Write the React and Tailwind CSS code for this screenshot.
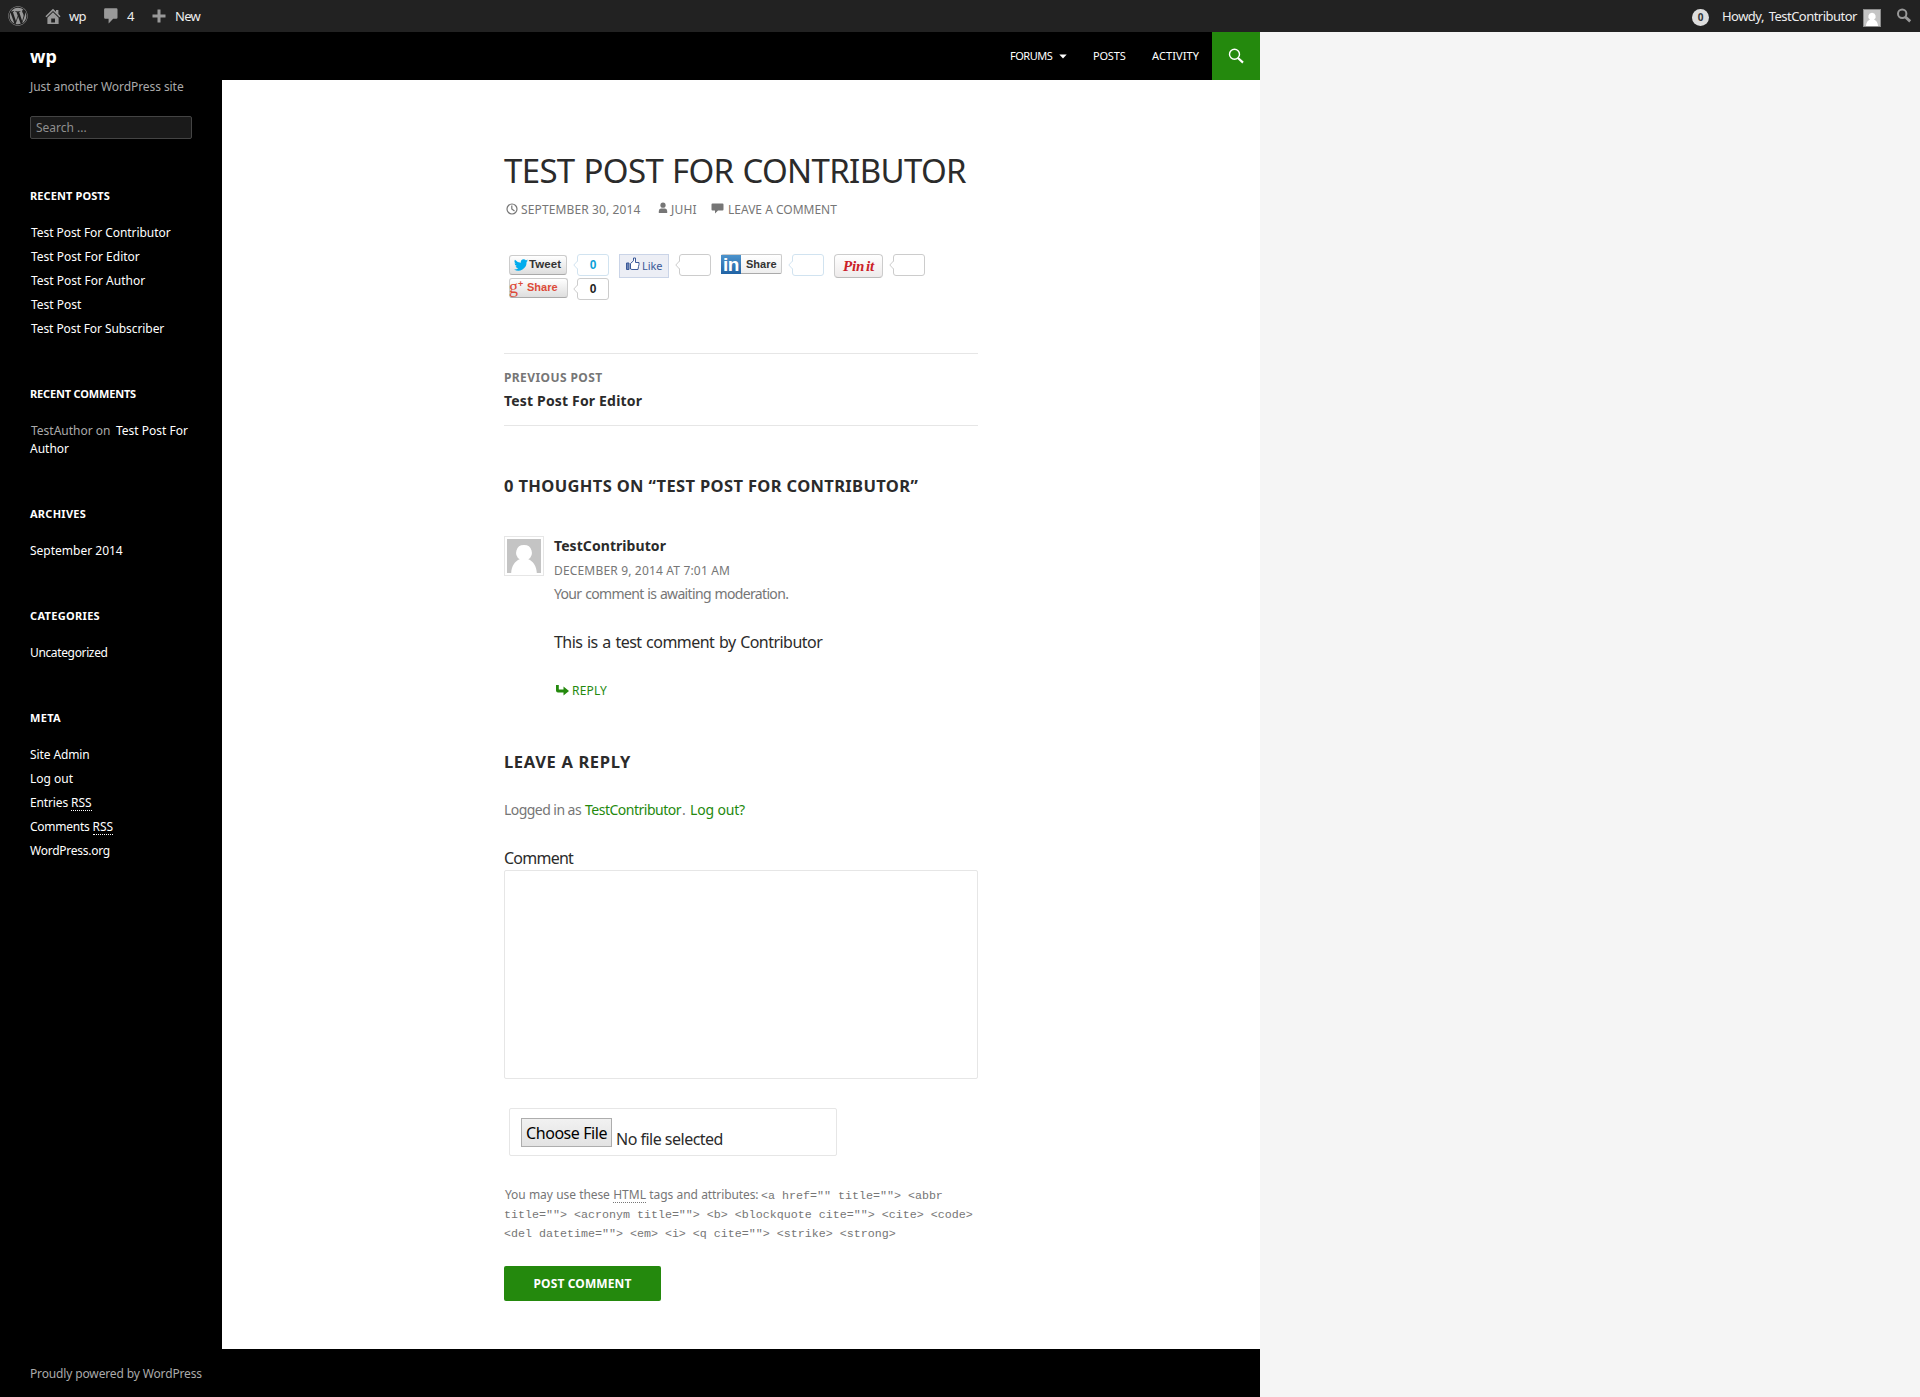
import { FaWordpress } from "react-icons/fa";

function HomeIcon() {
  return (
    <svg width="16" height="16" viewBox="0 0 16 16" className="block">
      <path fill="#999" d="M8 0.8 L11 3.7 V2 H13.4 V6 L15.6 8.2 L14.5 9.3 L8 3 L1.5 9.3 L0.4 8.2 Z" />
      <path fill="#999" fillRule="evenodd" d="M8 4.3 L13.6 9.7 V16 H2.4 V9.7 Z M6.2 10.5 V14.5 H10 V10.5 Z" />
    </svg>
  );
}

function AdminComment() {
  return (
    <svg width="14" height="16" viewBox="0 0 14 16" className="block">
      <path fill="#999" d="M1.3 0.2 H12.3 Q13.5 0.2 13.5 1.4 V9.6 Q13.5 10.8 12.3 10.8 H9.2 L4.6 15.4 V10.8 H1.3 Q0.1 10.8 0.1 9.6 V1.4 Q0.1 0.2 1.3 0.2 Z" />
    </svg>
  );
}

function Person({ className }) {
  return (
    <svg viewBox="0 0 34 34" className={className}>
      <rect width="34" height="34" fill="#c4c4c4" />
      <path fill="#fff" d="M17 6 a7.7 7.7 0 0 1 4.3 14.2 C26 22 29.5 27 29.8 34 H4.2 C4.5 27 8 22 12.7 20.2 A7.7 7.7 0 0 1 17 6 Z" />
    </svg>
  );
}

function AdminBar() {
  return (
    <div className="flex h-8 items-center bg-[#222] text-[13px] leading-8 text-[#eee]">
      <FaWordpress className="ml-2 size-5 text-[#999]" />
      <div className="ml-[17px]"><HomeIcon /></div>
      <span className="ml-2 w-[35px] tracking-[-0.6px]">wp</span>
      <AdminComment />
      <span className="ml-[9px] w-[26px]">4</span>
      <svg width="14" height="14" viewBox="0 0 14 14" className="-ml-px block">
        <path d="M7 0.5 V13.5 M0.5 7 H13.5" stroke="#999" strokeWidth="3" />
      </svg>
      <span className="ml-[9px] tracking-[-0.7px]">New</span>
      <span className="mt-[2px] mr-[13px] ml-auto flex size-[17px] items-center justify-center rounded-full bg-[#ddd] text-[10px] leading-none font-bold text-[#32373c]">0</span>
      <span className="w-[141px] tracking-[-0.53px] whitespace-nowrap [word-spacing:2px]">Howdy, TestContributor</span>
      <span className="mt-1 block size-[18px] border border-[#8c8c8c]">
        <Person className="block size-4" />
      </span>
      <svg width="16" height="16" viewBox="0 0 16 16" className="mr-2 ml-[15px] block">
        <circle cx="6.2" cy="5.8" r="4.2" fill="none" stroke="#999" strokeWidth="2" />
        <path d="M9.4 9 L14.2 13.4" stroke="#999" strokeWidth="2.8" />
      </svg>
    </div>
  );
}

function Widget({ title, tracking, children }) {
  return (
    <section className="mb-12">
      <h2 className={`mb-[21px] text-[11px] leading-[15px] font-bold text-white ${tracking}`}>{title}</h2>
      <div className="flex flex-col gap-1.5 text-xs leading-[18px] whitespace-nowrap text-white">{children}</div>
    </section>
  );
}

function Abbr({ children }) {
  return <span className="relative inline-block tracking-normal">{children}<i className="absolute inset-x-0 bottom-px border-b border-dotted border-current" /></span>;
}

function Sidebar() {
  return (
    <aside className="w-[222px] shrink-0 px-[30px]">
      <h1 className="-mb-0.5 text-lg leading-[48px] font-bold tracking-[0.1px] text-white">wp</h1>
      <p className="text-xs leading-[18px] tracking-[-0.07px] whitespace-nowrap text-[#aaa]">Just another WordPress site</p>
      <div className="mt-5 mb-[49px] h-[23px] rounded-[2px] border border-[#444] bg-[#1a1a1a] px-[5px] text-xs leading-[21px] text-[#8f8f8f]">Search ...</div>
      <Widget title="RECENT POSTS" tracking="tracking-[0.1px]">
        <a className="pl-px tracking-[-0.06px]">Test Post For Contributor</a>
        <a className="pl-px">Test Post For Editor</a>
        <a className="pl-px">Test Post For Author</a>
        <a className="pl-px">Test Post</a>
        <a className="pl-px tracking-[-0.08px]">Test Post For Subscriber</a>
      </Widget>
      <Widget title="RECENT COMMENTS" tracking="tracking-[-0.17px]">
        <p><span className="inline-block w-[86px] pl-px text-[#aaa]">TestAuthor on</span>Test Post For<br />Author</p>
      </Widget>
      <Widget title="ARCHIVES" tracking="tracking-[0.26px]">
        <a>September 2014</a>
      </Widget>
      <Widget title="CATEGORIES" tracking="tracking-[0.32px]">
        <a className="tracking-[-0.36px]">Uncategorized</a>
      </Widget>
      <Widget title="META" tracking="tracking-[0.32px]">
        <a className="tracking-[-0.1px]">Site Admin</a>
        <a>Log out</a>
        <a className="tracking-[-0.14px]">Entries <Abbr>RSS</Abbr></a>
        <a className="tracking-[-0.24px]">Comments <Abbr>RSS</Abbr></a>
        <a className="tracking-[-0.25px]">WordPress.org</a>
      </Widget>
    </aside>
  );
}

function Bubble({ border, text, color }) {
  return (
    <div className="flex items-center">
      <svg width="5" height="10" viewBox="0 0 5 10" className="relative z-10 -mr-px block">
        <path d="M5 0.8 L1 5 L5 9.2 Z" fill="#fff" />
        <path d="M4.5 1 L0.8 5 L4.5 9" fill="none" stroke={border} />
      </svg>
      <div className="h-[22px] w-8 rounded-[3px] border text-center font-['Liberation_Sans'] text-xs leading-5 font-bold" style={{ borderColor: border, color }}>{text}</div>
    </div>
  );
}

const grayButton = "flex items-center rounded-[3px] border border-[#ccc] border-b-[#aaa] bg-linear-to-b from-white to-[#dedede] font-['Liberation_Sans'] text-[11px] font-bold";

function ShareButtons() {
  return (
    <div className="mt-[35px] pl-[5px]">
      <div className="flex h-6 items-start">
        <div className={grayButton + " mt-px h-5 w-[58px] pl-1 text-[#333]"}>
          <svg width="14" height="12" viewBox="0 0 24 20" className="mr-px block shrink-0">
            <path fill="#00aced" d="M24 2.4a9.8 9.8 0 0 1-2.8.8A4.9 4.9 0 0 0 23.3.5a9.9 9.9 0 0 1-3.1 1.2 4.9 4.9 0 0 0-8.4 4.5A14 14 0 0 1 1.7 1a4.9 4.9 0 0 0 1.5 6.6 4.9 4.9 0 0 1-2.2-.6v.1a4.9 4.9 0 0 0 3.9 4.8 4.9 4.9 0 0 1-2.2.1 4.9 4.9 0 0 0 4.6 3.4A9.9 9.9 0 0 1 0 17.5 14 14 0 0 0 21.5 5c1-.7 1.8-1.6 2.5-2.6z" />
          </svg>
          <span className="text-[11.5px] tracking-[0.1px]">Tweet</span>
        </div>
        <div className="ml-1.5"><Bubble border="#d1e3f0" text="0" color="#0a9fd8" /></div>
        <div className="ml-2.5 flex h-6 w-[50px] items-center border border-[#cad4e7] bg-[#eceef5] pl-1.5 text-[11px] tracking-[-0.1px] text-[#3b5998]">
          <svg width="14" height="14" viewBox="0 0 14 14" className="-mt-1 mr-[2px] block shrink-0">
            <path d="M0.5 6 H3 V12.5 H0.5 Z" fill="#6d84b4" stroke="#3b5998" />
            <path d="M4.5 6.5 L7.5 3.8 V1 H9.5 V5.5 H13 V7.5 L12.5 9.5 L12 12.5 H6 L4.5 12 Z" fill="#fff" stroke="#3b5998" />
          </svg>
          Like
        </div>
        <div className="ml-1.5"><Bubble border="#ccc" /></div>
        <div className="ml-2.5 flex h-5 w-[61px] items-center rounded-[2px] border border-[#ccc] border-b-[#aaa] bg-linear-to-b from-white to-[#eee] font-['Liberation_Sans'] text-[11px] font-bold text-[#333]">
          <span className="-my-px -ml-px mr-[5px] flex h-[19px] w-5 items-center justify-center bg-linear-to-b from-[#4c93cc] to-[#2163a4] text-[19px] leading-none tracking-[-0.5px] text-white"><span>in</span></span>
          Share
        </div>
        <div className="ml-1.5"><Bubble border="#d1e3f0" /></div>
        <div className="ml-2.5 flex h-6 w-[49px] items-center justify-center rounded-[4px] border border-[#ccc] border-b-[#bbb] bg-linear-to-b from-white to-[#eeebeb] font-['Liberation_Serif'] text-[15px] leading-none font-bold tracking-[-0.1px] text-[#cb2027] italic [word-spacing:-2px]">Pin it</div>
        <div className="ml-1.5"><Bubble border="#ccc" /></div>
      </div>
      <div className="flex h-[22px] items-start">
        <div className={grayButton + " h-5 w-[59px] text-[#dd4b39]"}>
          <span className="-mt-0.5 -ml-px w-[9px] font-['Liberation_Serif'] text-[18px] leading-[18px] font-normal">g</span>
          <span className="-mt-1.5 mr-[3px] w-1.5 text-[9px]">+</span>
          <span className="-mt-0.5">Share</span>
        </div>
        <div className="ml-[5px]"><Bubble border="#ccc" text="0" color="#222" /></div>
      </div>
    </div>
  );
}

function Meta() {
  return (
    <div className="mt-3 flex items-center text-xs leading-[18px] text-[#767676]">
      <svg width="12" height="12" viewBox="0 0 12 12" className="-mt-0.5 mr-[3px] ml-0.5 block">
        <circle cx="6" cy="6" r="5" fill="none" stroke="#767676" strokeWidth="1.2" />
        <path d="M5.8 2.5 V6 L8.5 8" fill="none" stroke="#767676" strokeWidth="1.2" />
      </svg>
      <span className="w-[137px] tracking-[0.12px]">SEPTEMBER 30, 2014</span>
      <svg width="10" height="12" viewBox="0 0 10 12" className="-mt-1 mr-[3px] block">
        <circle cx="5" cy="3.2" r="2.6" fill="#767676" />
        <path d="M0.8 11 V9 Q0.8 6.5 3 6.5 H7 Q9.2 6.5 9.2 9 V11 Z" fill="#767676" />
      </svg>
      <span className="w-10 tracking-[0.2px]">JUHI</span>
      <svg width="13" height="11" viewBox="0 0 13 11" className="-mt-1 mr-1 block">
        <path d="M1.5 0.5 H11.5 Q12.5 0.5 12.5 1.5 V6.5 Q12.5 7.5 11.5 7.5 H7 L4 10.5 V7.5 H1.5 Q0.5 7.5 0.5 6.5 V1.5 Q0.5 0.5 1.5 0.5 Z" fill="#767676" />
      </svg>
      <span>LEAVE A COMMENT</span>
    </div>
  );
}

function Article() {
  return (
    <main className="h-[1269px] w-[1038px] bg-white pt-[73px] pl-[282px] text-[#2b2b2b]">
      <div className="w-[474px]">
        <h1 className="text-[33px] leading-9 tracking-[-0.65px] whitespace-nowrap [word-spacing:1px]">TEST POST FOR CONTRIBUTOR</h1>
        <Meta />
        <ShareButtons />
        <nav className="mt-[53px] border-y border-[#e6e6e6] pt-[13px] pb-3">
          <p className="mb-px text-xs leading-[21px] font-bold tracking-[0.4px] text-[#767676]">PREVIOUS POST</p>
          <p className="text-sm leading-6 font-bold tracking-[0.17px]">Test Post For Editor</p>
        </nav>
        <h2 className="mt-12 mb-[37px] text-[16.5px] leading-[23px] font-bold tracking-[0.35px] whitespace-nowrap">0 THOUGHTS ON “TEST POST FOR CONTRIBUTOR”</h2>
        <div className="flex">
          <div className="mt-0.5 mr-2.5 size-10 shrink-0 border border-[#e6e6e6] p-0.5"><Person className="block size-[34px]" /></div>
          <div>
            <p className="text-sm leading-6 font-bold tracking-[0.07px]">TestContributor</p>
            <p className="mt-px text-xs leading-6 tracking-[0.17px] text-[#767676]">DECEMBER 9, 2014 AT 7:01 AM</p>
            <p className="-mt-px text-sm leading-6 tracking-[-0.66px] text-[#767676] [word-spacing:0.7px]">Your comment is awaiting moderation.</p>
            <p className="mt-6 text-base leading-[25px] tracking-[-0.54px] [word-spacing:1px]">This is a test comment by Contributor</p>
            <p className="mt-[27px] flex items-center text-xs leading-[18px] tracking-[0.18px] text-[#24890d]">
              <svg width="14" height="12" viewBox="0 0 14 12" className="-mt-0.5 mr-[3px] ml-px block">
                <path fill="#24890d" d="M1 1 H3.8 V5.5 H8.5 V2.5 L14 7 L8.5 11.5 V8.5 H3 Q1 8.5 1 6.5 Z" />
              </svg>
              REPLY
            </p>
          </div>
        </div>
        <h2 className="mt-[50px] mb-[25px] text-[16.5px] leading-[23px] font-bold tracking-[0.65px]">LEAVE A REPLY</h2>
        <p className="flex text-sm leading-6 whitespace-nowrap text-[#767676]">
          <span className="w-[81px] tracking-[-0.55px]">Logged in as</span>
          <span className="w-[97px] tracking-[-0.5px] text-[#24890d]">TestContributor</span>
          <span className="w-[8px]">.</span>
          <span className="tracking-[-0.16px] text-[#24890d]">Log out?</span>
        </p>
        <p className="mt-[25px] text-base leading-[23px] tracking-[-0.75px]">Comment</p>
        <div className="h-[209px] rounded-[2px] border border-[#e6e6e6]" />
        <div className="mt-[29px] ml-[5px] flex h-12 w-[328px] items-start rounded-[2px] border border-[#e6e6e6] pt-[9px] pl-[11px] text-base">
          <div className="h-[29px] w-[91px] border border-[#adadad] bg-linear-to-b from-[#f1f1f1] to-[#e3e3e3] pt-px text-center leading-[26px] tracking-[-0.44px] whitespace-nowrap text-black">Choose File</div>
          <span className="mt-[9px] ml-1 leading-6 tracking-[-0.51px]">No file selected</span>
        </div>
        <div className="mt-[29px] text-xs leading-[19px] whitespace-nowrap text-[#767676] [&_code]:font-['Liberation_Mono'] [&_code]:text-[11.67px] [&_code]:leading-none">
          <p className="flex h-[19px] items-baseline pl-px">
            <span className="w-[256px] tracking-[-0.1px] [word-spacing:0.4px]">You may use these <Abbr>HTML</Abbr> tags and attributes:</span>
            <code>{'<a href="" title=""> <abbr'}</code>
          </p>
          <p className="h-[19px]"><code>{'title=""> <acronym title=""> <b> <blockquote cite=""> <cite> <code>'}</code></p>
          <p className="h-[19px]"><code>{'<del datetime=""> <em> <i> <q cite=""> <strike> <strong>'}</code></p>
        </div>
        <button className="mt-6 block h-[35px] w-[157px] rounded-[2px] bg-[#24890d] text-xs font-bold tracking-[0.12px] text-white">POST COMMENT</button>
      </div>
    </main>
  );
}

function Nav() {
  return (
    <nav className="flex h-12 items-center justify-end text-[11px] leading-[48px] text-white">
      <span className="w-[43px] tracking-[-0.5px]">FORUMS</span>
      <svg width="8" height="5" viewBox="0 0 8 5" className="mr-[26px] ml-1.5 block"><path d="M0.3 0.5 H7.7 L4 4.5 Z" fill="#fff" /></svg>
      <span className="w-[59px] tracking-[-0.19px]">POSTS</span>
      <span className="w-[60px] tracking-[0.09px]">ACTIVITY</span>
      <div className="flex size-12 items-center justify-center bg-[#24890d]">
        <svg width="16" height="16" viewBox="0 0 16 16" className="block">
          <circle cx="6.5" cy="6.3" r="5" fill="none" stroke="#fff" strokeWidth="1.4" />
          <path d="M10 10 L15 14.6" stroke="#fff" strokeWidth="2.2" />
        </svg>
      </div>
    </nav>
  );
}

export default function App() {
  return (
    <div className="h-[1397px] w-[1920px] overflow-hidden bg-[#f5f5f5] font-['Noto_Sans','DejaVu_Sans_Condensed',sans-serif]">
      <AdminBar />
      <div className="w-[1260px] bg-black">
        <div className="flex">
          <Sidebar />
          <div className="w-[1038px]">
            <Nav />
            <Article />
          </div>
        </div>
        <footer className="h-12 pt-4 pl-[30px] text-xs leading-[18px] tracking-[-0.14px] text-[#aaa]">Proudly powered by WordPress</footer>
      </div>
    </div>
  );
}
